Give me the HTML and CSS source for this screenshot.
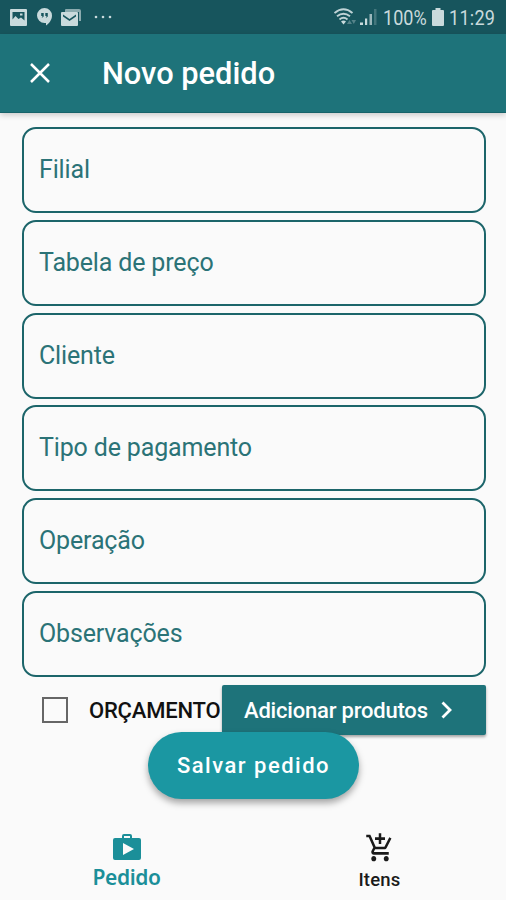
FILE: index.html
```html
<!DOCTYPE html>
<html lang="pt-BR">
<head>
    <meta charset="UTF-8"/>
    <meta name="viewport" content="width=device-width, initial-scale=1"/>
    <title>Novo pedido</title>
    <link rel="stylesheet" href="styles.css">
</head>
<body>

<!-- ========== STATUS BAR ========== -->
<div class="status-bar">
    <div class="status-left">
        <svg class="icon-photo" width="17" height="17" viewBox="0 0 17 17">
            <path fill-rule="evenodd" d="M1 0h15q1 0 1 1v15q0 1-1 1H1q-1 0-1-1V1q0-1 1-1zM2.500 3v7.500l3-3.500 3 3 2.500-1.500 3.500 3V3zM10 4.500h2.500v2H10z"/>
        </svg>
        <svg class="icon-chat" width="15" height="18" viewBox="0 0 15 18">
            <path fill-rule="evenodd" d="M7.500 0a7.500 7.500 0 0 1 7.500 7.500c0 4.500-3 8-6 10V15H7.500a7.500 7.500 0 0 1 0-15zM4.200 5v3h1.300l-.8 2 2-1.500V5zM8.300 5v3h1.300l-.8 2 2-1.500V5z"/>
        </svg>
        <svg class="icon-mail" width="20" height="17" viewBox="0 0 20 17">
            <path d="M5 0h13q2 0 2 2v10h-2V3H4V1q0-1 1-1z" opacity=".65"/>
            <path fill-rule="evenodd" d="M1 3h15q1 0 1 1v12q0 1-1 1H1q-1 0-1-1V4q0-1 1-1zM2 5.500v2L8.500 12 15 7.500v-2L8.500 10z"/>
        </svg>
        <svg class="icon-more" width="18" height="4" viewBox="0 0 18 4">
            <circle cx="2" cy="2" r="1.300"/><circle cx="9" cy="2" r="1.300"/><circle cx="16" cy="2" r="1.300"/>
        </svg>
    </div>
    <div class="status-right">
        <svg class="icon-wifi" width="22" height="18" viewBox="0 0 22 18">
            <g fill="none" stroke="#bfd3d6" stroke-width="1.900">
                <path d="M.5 5q9-7.500 18 0"/>
                <path d="M3 8.300q6.500-5 13 0"/>
                <path d="M5.500 11.500q4-3.300 8 0"/>
            </g>
            <path d="M7 13.500q2.500-2 5 0L9.500 16.500z"/>
            <path d="M13 16l2.500-4 2.500 4zM17.500 12h4.500l-2.200 4z" opacity=".35"/>
        </svg>
        <svg class="icon-signal" width="17" height="18" viewBox="0 0 17 18">
            <path d="M0 14.500h3V17H0zM5 10.500h2.200V17H5z"/>
            <path d="M9.500 6h2.500v11H9.500z" opacity=".75"/>
            <path d="M14 1h2.500v16H14z" opacity=".25"/>
        </svg>
        <span class="status-battery">100%</span>
        <svg class="icon-battery" width="12" height="18" viewBox="0 0 12 18">
            <path d="M3.500 0h5v2H11q1 0 1 1v14q0 1-1 1H1q-1 0-1-1V3q0-1 1-1h2.500z"/>
        </svg>
        <span class="status-time">11:29</span>
    </div>
</div>

<!-- ========== APP BAR ========== -->
<header class="app-bar">
    <svg class="icon-close" width="20" height="20" viewBox="0 0 20 20">
        <path d="M1 1l18 18M19 1L1 19" fill="none" stroke="#fff" stroke-width="2.500"/>
    </svg>
    <h1>Novo pedido</h1>
</header>

<!-- ========== ORDER FORM ========== -->
<main class="form">
    <div class="field">Filial</div>
    <div class="field">Tabela de preço</div>
    <div class="field">Cliente</div>
    <div class="field">Tipo de pagamento</div>
    <div class="field">Operação</div>
    <div class="field">Observações</div>

    <div class="actions">
        <div class="quote">
            <span class="checkbox"></span>
            <span class="quote-label">ORÇAMENTO</span>
        </div>
        <div class="add-button">
            <span>Adicionar produtos</span>
            <svg width="11" height="18" viewBox="0 0 11 18">
                <path d="M1.500 1.500L9 9l-7.500 7.500" fill="none" stroke="#fff" stroke-width="2.800"/>
            </svg>
        </div>
    </div>
</main>

<div class="save-button">Salvar pedido</div>

<!-- ========== BOTTOM NAVIGATION ========== -->
<nav class="bottom-nav">
    <div class="tab active">
        <svg width="28" height="28" viewBox="0 0 28 28">
            <path fill-rule="evenodd" d="M9 5V3q0-2 2-2h6q2 0 2 2v2h7q2 0 2 2v18q0 2-2 2H2q-2 0-2-2V7q0-2 2-2zM11 3v2h6V3zM10 10v12l11-6z"/>
        </svg>
        <span>Pedido</span>
    </div>
    <div class="tab">
        <svg width="30" height="32" viewBox="0 0 24 24" preserveAspectRatio="none">
            <path d="M11 9h2V6h3V4h-3V1h-2v3H8v2h3v3zm-4 9c-1.100 0-1.990.9-1.990 2S5.900 22 7 22s2-.9 2-2-.9-2-2-2zm10 0c-1.100 0-1.990.9-1.990 2s.89 2 1.990 2 2-.9 2-2-.9-2-2-2zm-9.830-3.250l.03-.12.9-1.630h7.450c.75 0 1.410-.41 1.750-1.030l3.860-7.010L19.420 4h-.01l-1.100 2-2.760 5H8.530l-.13-.27L6.160 6l-.95-2-.94-2H1v2h2l3.600 7.590-1.350 2.450c-.16.28-.25.61-.25.960 0 1.100.9 2 2 2h12v-2H7.420c-.13 0-.25-.11-.25-.25z"/>
        </svg>
        <span>Itens</span>
    </div>
</nav>

</body>
</html>
```
FILE: styles.css
```css
/* ========== GLOBAL STYLES ========== */
* {
  box-sizing: border-box;
}

body {
  margin: 0;
  height: 900px;
  background-color: #fafafa;
  font-family: Roboto, sans-serif;
  display: flex;
  flex-direction: column;
  overflow: hidden;
}

svg {
  display: block;
  flex: none;
}

/* ========== STATUS BAR ========== */
.status-bar {
  flex: none;
  height: 34px;
  padding: 0 11px 0 10px;
  background-color: #17555d;
  display: flex;
  align-items: center;
  justify-content: space-between;
  color: #c9dadc;
  fill: #c9dadc;
  font-size: 21px;
}

.status-left,
.status-right {
  display: flex;
  align-items: center;
}

.icon-chat {
  margin-left: 10px;
}

.icon-mail {
  margin-left: 9px;
}

.icon-more {
  margin-left: 13px;
}

.icon-signal {
  margin: 0 6px 0 4px;
}

.icon-battery {
  margin: 0 5px 0 5px;
}

/* Condensed digits */
.status-battery,
.status-time {
  padding-top: 2px;
  white-space: nowrap;
  transform: scaleX(0.86);
  transform-origin: left;
}

.status-battery {
  width: 44px;
}

.status-time {
  width: 46px;
  letter-spacing: 0.3px;
}

/* ========== APP BAR ========== */
.app-bar {
  flex: none;
  height: 79px;
  padding-left: 30px;
  background-color: #1e737a;
  border-bottom: 1px solid #17636a;
  box-shadow: 0 2px 6px rgba(0,0,0,0.2);
  display: flex;
  align-items: center;
}

.app-bar h1 {
  margin: 0 0 0 52px;
  color: #fff;
  font-size: 30.8px;
  font-weight: 500;
}

/* ========== ORDER FORM ========== */
.form {
  padding: 14px 20px 0 21.5px;
}

.field {
  height: 86px;
  margin-bottom: 6.8px;
  padding: 0 0 1px 15.5px;
  border: 2.5px solid #1c656a;
  border-radius: 14px;
  display: flex;
  align-items: center;
  color: #2b7377;
  font-size: 25px;
  letter-spacing: -0.15px;
}

.actions {
  display: flex;
  justify-content: space-between;
  margin-top: 8px;
}

.quote {
  display: flex;
  align-items: center;
  padding: 1px 0 0 20.5px;
}

.checkbox {
  width: 26px;
  height: 26px;
  border: 2px solid #666;
}

.quote-label {
  margin-left: 21px;
  color: #111;
  font-size: 22px;
  font-weight: 500;
  letter-spacing: -0.2px;
}

.add-button {
  flex: none;
  width: 264.5px;
  height: 50px;
  padding: 1px 0 0 22.5px;
  background-color: #1e737a;
  border-radius: 2px;
  box-shadow: 0 2px 3px rgba(0,0,0,0.35);
  display: flex;
  align-items: center;
  gap: 13px;
  color: #fff;
  font-size: 22px;
  font-weight: 500;
  letter-spacing: -0.2px;
}

/* Floats over the lower edge of the actions row */
.save-button {
  position: absolute;
  left: 148px;
  top: 732px;
  width: 211px;
  height: 67px;
  border-radius: 34px;
  background-color: #1b97a2;
  box-shadow: 0 4px 7px rgba(0,0,0,0.35);
  color: #fff;
  font-size: 22px;
  font-weight: 500;
  letter-spacing: 1.5px;
  line-height: 67px;
  text-align: center;
}

/* ========== BOTTOM NAVIGATION ========== */
.bottom-nav {
  height: 76px;
  margin-top: auto;
  display: flex;
}

.tab {
  flex: 1;
  display: flex;
  flex-direction: column;
  align-items: center;
  padding-top: 8px;
  color: #1a1a1a;
  fill: #1a1a1a;
  font-size: 18.5px;
  font-weight: 500;
  letter-spacing: 0.2px;
}

.tab span {
  line-height: 22px;
  margin-top: 5px;
}

.tab.active {
  padding-top: 9px;
  color: #1b8f99;
  fill: #1b8f99;
  font-family: "Noto Sans", sans-serif;
  font-size: 21px;
  font-weight: 600;
  letter-spacing: -0.4px;
}
```
